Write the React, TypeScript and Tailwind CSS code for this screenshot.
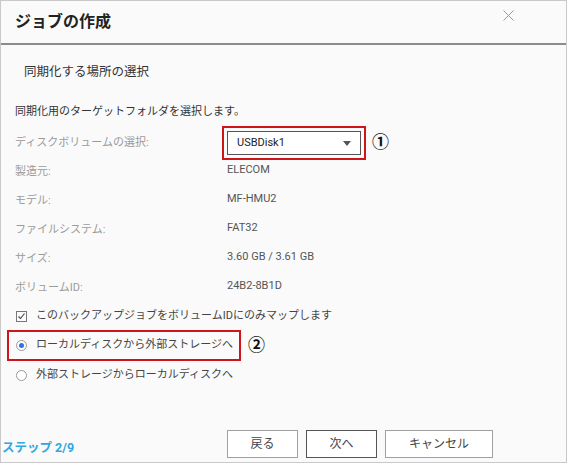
import React from "react";

const rows: { label: string; value: string }[] = [
  { label: "製造元:", value: "ELECOM" },
  { label: "モデル:", value: "MF-HMU2" },
  { label: "ファイルシステム:", value: "FAT32" },
  { label: "サイズ:", value: "3.60 GB / 3.61 GB" },
  { label: "ボリュームID:", value: "24B2-8B1D" },
];

const Radio: React.FC<{ checked?: boolean }> = ({ checked }) => (
  <span className="w-[11px] h-[11px] rounded-full border border-[#9a9a9a] bg-white flex items-center justify-center shrink-0">
    {checked && <span className="w-[5px] h-[5px] rounded-full bg-[#2f72e4]" />}
  </span>
);

export default function App() {
  return (
    <div className="w-[567px] h-[463px] bg-[#fafafa] border border-[#c9c9c9] flex flex-col font-['Roboto','Noto_Sans_CJK_JP',sans-serif] text-[11px] text-[#333]">
      {/* header */}
      <div className="h-[44px] border-b-2 border-[#8c8c8c] flex justify-between pl-[14px] pr-[52px] shrink-0">
        <h1 className="pt-[10px] text-[16px] leading-[22px] font-bold text-[#222]">ジョブの作成</h1>
        <svg className="mt-[9px] w-[11px] h-[11px]" viewBox="0 0 11 11" fill="none" stroke="#9a9a9a" strokeWidth="1">
          <path d="M0.5 0.5l10 10M10.5 0.5l-10 10" />
        </svg>
      </div>

      {/* body */}
      <div className="flex flex-col px-[14px] flex-1">
        <div className="mt-[17px] pl-[9px] text-[12.5px] leading-[20px] text-[#333]">同期化する場所の選択</div>
        <div className="mt-[21px] leading-[18px] text-[#333]">同期化用のターゲットフォルダを選択します。</div>

        <div className="mt-[5px] flex items-center">
          <div className="w-[207px] leading-[18px] text-[#9a9a9a]">ディスクボリュームの選択:</div>
          <div className="border-2 border-[#d0141c] p-[3px]">
            <div className="w-[134px] h-[24px] border border-[#555] bg-white flex items-center justify-between pl-[9px] pr-[9px]">
              <span className="text-[11px] text-[#222]">USBDisk1</span>
              <svg width="8" height="5" viewBox="0 0 8 5">
                <path d="M0 0h8L4 5z" fill="#555" />
              </svg>
            </div>
          </div>
          <span className="ml-[6px] text-[17px] font-bold text-[#111]">①</span>
        </div>

        {rows.map((r) => (
          <div key={r.label} className="h-[29px] flex">
            <div className="w-[212px] pt-[3px] leading-[18px] text-[#9a9a9a]">{r.label}</div>
            <div className="pt-[1px] leading-[18px] text-[#555]">{r.value}</div>
          </div>
        ))}

        <div className="mt-[2px] flex items-center leading-[18px] pl-[1px]">
          <svg width="11" height="11" viewBox="0 0 11 11" fill="none">
            <rect x="0.5" y="0.5" width="10" height="10" stroke="#777" />
            <path d="M2.5 5.5l2 2 4-5" stroke="#444" strokeWidth="1.1" />
          </svg>
          <span className="ml-[9px] text-[#444]">このバックアップジョブをボリュームIDにのみマップします</span>
        </div>

        <div className="mt-[5px] -ml-[8px] flex items-center">
          <div className="w-[234px] h-[31px] border-2 border-[#d0141c] flex items-center pl-[7px]">
            <Radio checked />
            <span className="ml-[9px] text-[#444] whitespace-nowrap">ローカルディスクから外部ストレージへ</span>
          </div>
          <span className="ml-[7px] text-[17px] font-bold text-[#111]">②</span>
        </div>

        <div className="mt-[5px] flex items-center leading-[18px] pl-[1px]">
          <Radio />
          <span className="ml-[9px] text-[#444]">外部ストレージからローカルディスクへ</span>
        </div>

        {/* footer */}
        <div className="mt-auto -ml-[13px] flex items-end pb-[4px]">
          <div className="w-[225px] pb-[2px] text-[12.5px] leading-[16px] font-bold text-[#2fa8e0]">ステップ 2/9</div>
          <div className="flex gap-[8px]">
            <button className="w-[71px] h-[28px] bg-white border border-[#a0a0a0] text-[12px] text-[#444]">戻る</button>
            <button className="w-[71px] h-[28px] bg-white border border-[#555] text-[12px] text-[#444]">次へ</button>
            <button className="w-[108px] h-[28px] bg-white border border-[#a0a0a0] text-[12px] text-[#444]">キャンセル</button>
          </div>
        </div>
      </div>
    </div>
  );
}
